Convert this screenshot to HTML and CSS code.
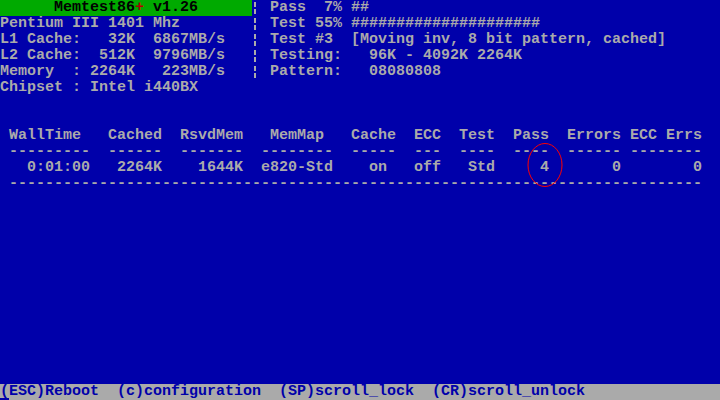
FILE: index.html
```html
<!DOCTYPE html>
<html lang="en">
<head>
    <meta charset="UTF-8"/>
    <title>Memtest86+ v1.26</title>
    <link rel="stylesheet" href="styles.css">
</head>
<body>
<div class="screen">
    <div class="info">
        <div class="line"><span class="title">      Memtest86<span class="plus">+</span> v1.26      </span><span class="sep">¦</span> Pass  7% ##</div>
        <div class="line">Pentium III 1401 Mhz        <span class="sep">¦</span> Test 55% #####################</div>
        <div class="line">L1 Cache:   32K  6867MB/s   <span class="sep">¦</span> Test #3  [Moving inv, 8 bit pattern, cached]</div>
        <div class="line">L2 Cache:  512K  9796MB/s   <span class="sep">¦</span> Testing:   96K - 4092K 2264K</div>
        <div class="line">Memory  : 2264K   223MB/s   <span class="sep">¦</span> Pattern:   08080808</div>
        <div class="line">Chipset : Intel i440BX</div>
    </div>
    <div class="status">
        <div class="line"> WallTime   Cached  RsvdMem   MemMap   Cache  ECC  Test  Pass  Errors ECC Errs</div>
        <div class="line"> ---------  ------  -------  --------  -----  ---  ----  ----  ------ --------</div>
        <div class="line">   0:01:00   2264K    1644K  e820-Std    on   off   Std     4       0        0</div>
        <div class="line"> -----------------------------------------------------------------------------</div>
        <svg class="mark" width="36" height="46" viewBox="0 0 36 46">
            <ellipse cx="18" cy="23" rx="17" ry="21.5" fill="none" stroke="#ff0000" stroke-width="1"/>
        </svg>
    </div>
    <div class="keys line"><span class="cursor">(</span>ESC)Reboot  (c)configuration  (SP)scroll_lock  (CR)scroll_unlock</div>
</div>
</body>
</html>
```
FILE: styles.css
```css
html, body {
    margin: 0;
    padding: 0;
    background-color: #0000aa;
}

.screen {
    width: 720px;
    height: 400px;
    display: flex;
    flex-direction: column;
    color: #aaaaaa;
    font-family: "Liberation Mono", "DejaVu Sans Mono", monospace;
    font-weight: bold;
    font-size: 15px;
    overflow: hidden;
}

.line {
    white-space: pre;
    height: 16px;
    line-height: 16px;
}

.title {
    background-color: #00aa00;
    color: #000000;
}

.title .plus {
    color: #aa0000;
}

/* broken bar drawn like the VGA glyph */
.sep {
    display: inline-block;
    width: 9px;
    height: 16px;
    vertical-align: top;
    color: transparent;
    background:
        linear-gradient(#aaaaaa, #aaaaaa) 2px 2px / 2px 5px no-repeat,
        linear-gradient(#aaaaaa, #aaaaaa) 2px 9px / 2px 5px no-repeat;
}

.status {
    position: relative;
    margin-top: 32px;
}

.mark {
    position: absolute;
    left: 527px;
    top: 14px;
}

.keys {
    margin-top: auto;
    background-color: #aaaaaa;
    color: #0000aa;
}

.cursor {
    display: inline-block;
    height: 16px;
    vertical-align: top;
    background: linear-gradient(transparent 14px, #0000aa 14px);
}
```
